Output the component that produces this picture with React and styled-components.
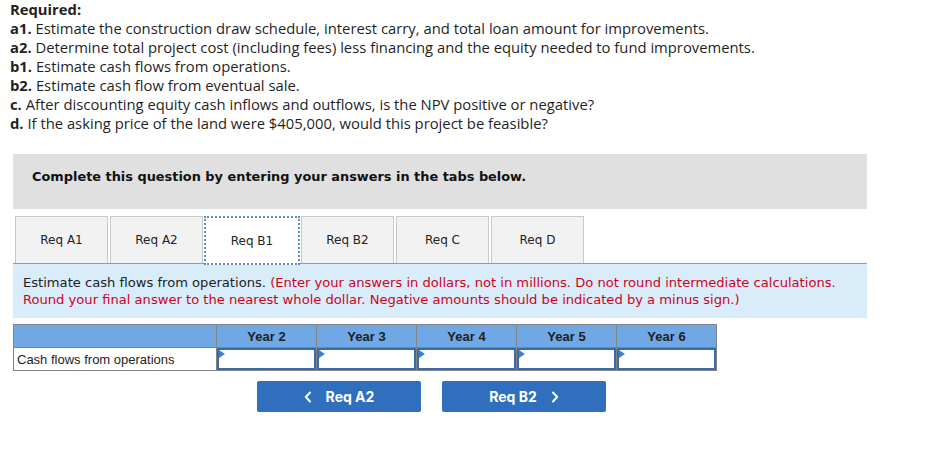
import styled, { createGlobalStyle } from "styled-components";

const GlobalStyle = createGlobalStyle`
  html, body {
    margin: 0;
    padding: 0;
    background: #fff;
  }
`;

const Page = styled.div`
  width: 940px;
  height: 454px;
  padding: 0 0 0 10px;
  box-sizing: border-box;
  overflow: hidden;
`;

const Required = styled.div`
  font-family: "Open Sans", Lato, sans-serif;
  font-size: 14.8px;
  line-height: 19px;
  color: #1f1f1f;

  b {
    font-weight: 700;
  }
`;

const Instructions = styled.div`
  margin: 21px 0 0 3px;
  width: 854px;
  height: 55px;
  background: #e0e0e0;
  padding: 15px 0 0 19px;
  box-sizing: border-box;
  font-family: "DejaVu Sans", Verdana, sans-serif;
  font-weight: 700;
  font-size: 12.9px;
  line-height: 16px;
  color: #111;
`;

const TabRow = styled.div`
  display: flex;
  gap: 2px;
  margin: 7px 0 0 5px;
  height: 47px;
  align-items: flex-end;
`;

const Tab = styled.div`
  width: ${(p) => (p.$active ? "96px" : "93px")};
  height: ${(p) => (p.$active ? "49px" : "47px")};
  margin: ${(p) => (p.$active ? "0 -1px -2px" : "0")};
  box-sizing: border-box;
  display: flex;
  align-items: center;
  justify-content: center;
  background: ${(p) => (p.$active ? "#fff" : "#f2f2f2")};
  border: ${(p) => (p.$active ? "2px dotted #5a8fd3" : "1px solid #c9c9c9")};
  border-bottom: ${(p) => (p.$active ? "2px dotted #5a8fd3" : "none")};
  position: relative;
  z-index: ${(p) => (p.$active ? 2 : 1)};
  font-family: "DejaVu Sans", Verdana, sans-serif;
  font-size: 12px;
  color: #222;
`;

const Panel = styled.div`
  margin-left: 3px;
  width: 854px;
  height: 55px;
  box-sizing: border-box;
  background: #d8ecfa;
  border-top: 1px solid #9a9a9a;
  padding: 10px 0 0 10px;
  font-family: "DejaVu Sans", Verdana, sans-serif;
  font-size: 13.1px;
  line-height: 17px;
  color: #222;
`;

const Note = styled.span`
  color: #d0021b;
`;

const Table = styled.table`
  margin: 6px 0 0 3px;
  border-collapse: collapse;
  font-family: "Liberation Sans", Arial, sans-serif;
  font-size: 13px;
`;

const Head = styled.th`
  width: ${(p) => p.$w}px;
  height: 22px;
  padding: 0;
  background: #6fa8e4;
  border: 1px solid #858585;
  font-weight: 700;
  color: #1e1e1e;
  text-align: center;
`;

const Label = styled.td`
  height: 22px;
  padding: 0 0 0 3px;
  border: 1px solid #858585;
  color: #1e1e1e;
`;

const InputCell = styled.td`
  padding: 0;
  border: 1px solid #858585;
`;

const Field = styled.div`
  height: 22px;
  box-sizing: border-box;
  border: 2px solid #3a6aa8;
  background: #fff;
  position: relative;

  &::before {
    content: "";
    position: absolute;
    left: 0;
    top: 0;
    border-top: 4px solid transparent;
    border-bottom: 4px solid transparent;
    border-left: 6px solid #3f7fd0;
  }
`;

const Nav = styled.div`
  display: flex;
  gap: 21px;
  margin: 10px 0 0 247px;
`;

const NavButton = styled.div`
  width: 164px;
  height: 31px;
  border-radius: 2px;
  background: #2f6fbd;
  color: #fff;
  display: flex;
  align-items: center;
  justify-content: center;
  gap: 14px;
  font-family: Inter, Roboto, sans-serif;
  font-weight: 700;
  font-size: 14px;
`;

const Chevron = ({ dir }) => (
  <svg width="8" height="12" viewBox="0 0 8 12">
    <path
      d={dir === "left" ? "M6 1.5 L1.8 6 L6 10.5" : "M2 1.5 L6.2 6 L2 10.5"}
      fill="none"
      stroke="#fff"
      strokeWidth="2"
      strokeLinecap="round"
      strokeLinejoin="round"
    />
  </svg>
);

const tabs = ["Req A1", "Req A2", "Req B1", "Req B2", "Req C", "Req D"];
const years = ["Year 2", "Year 3", "Year 4", "Year 5", "Year 6"];

export default function App() {
  return (
    <Page>
      <GlobalStyle />
      <Required>
        <b>Required:</b>
        <div>
          <b>a1.</b> Estimate the construction draw schedule, interest carry, and total loan amount for improvements.
        </div>
        <div>
          <b>a2.</b> Determine total project cost (including fees) less financing and the equity needed to fund improvements.
        </div>
        <div>
          <b>b1.</b> Estimate cash flows from operations.
        </div>
        <div>
          <b>b2.</b> Estimate cash flow from eventual sale.
        </div>
        <div>
          <b>c.</b> After discounting equity cash inflows and outflows, is the NPV positive or negative?
        </div>
        <div>
          <b>d.</b> If the asking price of the land were $405,000, would this project be feasible?
        </div>
      </Required>

      <Instructions>Complete this question by entering your answers in the tabs below.</Instructions>

      <TabRow>
        {tabs.map((t) => (
          <Tab key={t} $active={t === "Req B1"}>
            {t}
          </Tab>
        ))}
      </TabRow>

      <Panel>
        Estimate cash flows from operations.{" "}
        <Note>
          (Enter your answers in dollars, not in millions. Do not round intermediate calculations.
          Round your final answer to the nearest whole dollar. Negative amounts should be indicated by a minus sign.)
        </Note>
      </Panel>

      <Table>
        <thead>
          <tr>
            <Head $w={202}></Head>
            {years.map((y) => (
              <Head key={y} $w={99}>
                {y}
              </Head>
            ))}
          </tr>
        </thead>
        <tbody>
          <tr>
            <Label>Cash flows from operations</Label>
            {years.map((y) => (
              <InputCell key={y}>
                <Field />
              </InputCell>
            ))}
          </tr>
        </tbody>
      </Table>

      <Nav>
        <NavButton>
          <Chevron dir="left" />
          Req A2
        </NavButton>
        <NavButton>
          Req B2
          <Chevron dir="right" />
        </NavButton>
      </Nav>
    </Page>
  );
}
